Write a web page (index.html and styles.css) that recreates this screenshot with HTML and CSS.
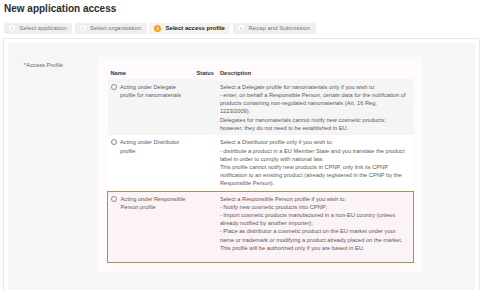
FILE: index.html
```html
<!DOCTYPE html>
<html lang="en">
<head>
  <meta charset="UTF-8">
  <title>New application access</title>
  <link rel="stylesheet" href="styles.css">
</head>
<body>
  <h1 class="page-title">New application access</h1>

  <div class="steps">
    <div class="step"><span class="step-num">1</span>Select application</div>
    <div class="step"><span class="step-num">2</span>Select organisation</div>
    <div class="step active"><span class="step-num">3</span>Select access profile</div>
    <div class="step"><span class="step-num">4</span>Recap and Submission</div>
  </div>

  <div class="panel">
    <div class="panel-inner">
      <div class="field-label"><span class="req">*</span>Access Profile</div>

      <div class="profile-card">
        <table class="profiles">
          <thead>
            <tr>
              <th class="col-name">Name</th>
              <th class="col-status">Status</th>
              <th>Description</th>
            </tr>
          </thead>
          <tbody>
            <tr class="striped">
              <td>
                <label class="choice"><span class="radio"></span><span>Acting under Delegate<br>profile for nanomaterials</span></label>
              </td>
              <td></td>
              <td>
                Select a Delegate profile for nanomaterials only if you wish to:<br>
                - enter, on behalf a Responsible Person, certain data for the notification of<br>
                products containing non-regulated nanomaterials (Art. 16 Reg.<br>
                1223/2009).<br>
                Delegates for nanomaterials cannot notify new cosmetic products;<br>
                however, they do not need to be established in EU.
              </td>
            </tr>
            <tr class="plain">
              <td>
                <label class="choice"><span class="radio"></span><span>Acting under Distributor<br>profile</span></label>
              </td>
              <td></td>
              <td>
                Select a Distributor profile only if you wish to:<br>
                - distribute a product in a EU Member State and you translate the product<br>
                label in order to comply with national law.<br>
                This profile cannot notify new products in CPNP, only link its CPNP<br>
                notification to an existing product (already registered in the CPNP by the<br>
                Responsible Person).
              </td>
            </tr>
            <tr class="selected">
              <td>
                <label class="choice"><span class="radio"></span><span>Acting under Responsible<br>Person profile</span></label>
              </td>
              <td></td>
              <td>
                Select a Responsible Person profile if you wish to:<br>
                - Notify new cosmetic products into CPNP;<br>
                - Import cosmetic products manufactured in a non-EU country (unless<br>
                already notified by another importer);<br>
                - Place as distributor a cosmetic product on the EU market under your<br>
                name or trademark or modifying a product already placed on the market.<br>
                This profile will be authorized only if you are based in EU.
              </td>
            </tr>
          </tbody>
        </table>
      </div>
    </div>
  </div>
</body>
</html>
```

FILE: styles.css
```css
* {
  margin: 0;
  padding: 0;
  box-sizing: border-box;
}

body {
  font-family: 'Liberation Sans', Arial, sans-serif;
  color: #555;
  background: #fff;
  padding: 2px 3px 0;
  overflow: hidden;
}

.page-title {
  font-size: 10px;
  font-weight: bold;
  color: #2b2b2b;
  line-height: 13px;
  padding-left: 1px;
}

.steps {
  display: flex;
  gap: 2.5px;
  margin-top: 8px;
  padding-left: 1px;
}

.step {
  display: flex;
  align-items: center;
  gap: 4.5px;
  height: 10.5px;
  padding: 0 5.5px 0 5px;
  background: #efefef;
  border-radius: 2px;
  font-size: 6px;
  color: #777;
}

.step-num {
  display: inline-flex;
  align-items: center;
  justify-content: center;
  width: 6px;
  height: 6px;
  border-radius: 50%;
  background: #fff;
  color: #aaa;
  font-size: 4px;
}

.step.active {
  background: #f3f3f3;
  color: #222;
  font-weight: bold;
}

.step.active .step-num {
  width: 7px;
  height: 7px;
  background: #f5a020;
  color: #fff;
}

.panel {
  margin-top: 4.5px;
  border: 1px solid #e9e9e9;
  padding: 4px;
  height: 262px;
}

.panel-inner {
  display: flex;
  align-items: flex-start;
  background: #f6f6f6;
  height: 100%;
  padding: 14px 0 0 16px;
}

.field-label {
  width: 74px;
  font-size: 5.8px;
  color: #666;
  padding-top: 5px;
}

.req {
  color: #e0303a;
}

.profile-card {
  flex: none;
  width: 324px;
  background: #fffafc;
  padding: 9px 8px 9px 9px;
}

.profiles {
  width: 100%;
  border-collapse: collapse;
  font-size: 5.7px;
  line-height: 8.2px;
  color: #5a5a5a;
  white-space: nowrap;
}

.profiles th {
  text-align: left;
  font-weight: bold;
  color: #333;
  padding: 3px 3px 2px;
}

.profiles td {
  vertical-align: top;
  padding: 3.5px 3px;
  background: #fff;
}

.col-name {
  width: 86px;
}

.col-status {
  width: 23px;
}

.profiles tr.striped td {
  background: #f5f5f5;
}

.profiles tr.plain td {
  padding-top: 3px;
  padding-bottom: 3px;
}

.profiles tr.selected td {
  background: #fcf3f6;
  border-top: 1.5px solid #a8905e;
  border-bottom: 1.5px solid #a8905e;
  padding-top: 3px;
  padding-bottom: 10px;
}

.profiles tr.selected td:first-child {
  border-left: 1.5px solid #a8905e;
}

.profiles tr.selected td:last-child {
  border-right: 1.5px solid #a8905e;
}

.choice {
  display: flex;
  gap: 3.5px;
}

.radio {
  flex: none;
  width: 6px;
  height: 6px;
  margin-top: 1px;
  border: 0.8px solid #888;
  border-radius: 50%;
  background: #fff;
}
```
